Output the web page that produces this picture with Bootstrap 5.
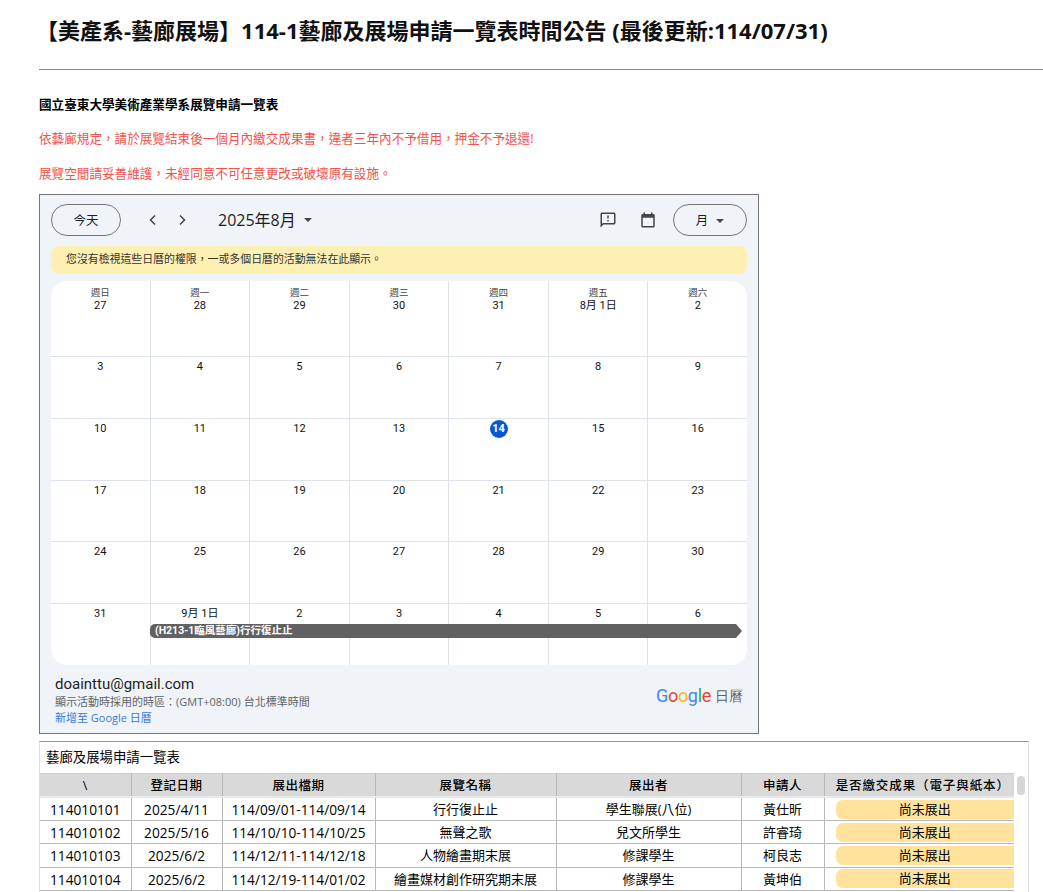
<!DOCTYPE html>
<html lang="zh-Hant">
<head>
<meta charset="utf-8">
<title>美產系-藝廊展場</title>
<link rel="stylesheet" href="https://cdn.jsdelivr.net/npm/bootstrap@5.3.0/dist/css/bootstrap.min.css">
<style>
  html, body { height: 892px; overflow: hidden; }
  body { font-family: "Open Sans", "Noto Sans CJK TC", sans-serif; color: #000; background: #fff; }
  .page-wrap { padding: 0 0 0 39px; }
  .post-title { font-size: 22px; font-weight: 700; margin: 0; padding: 17px 0 0 0; height: 69px; color: #111; text-indent: -3px; }
  .post-rule { border-top: 1px solid #888; margin: 0; opacity: 1; }
  .intro { font-size: 12.6px; line-height: 18px; margin: 0; }
  .intro-head { font-weight: 700; padding-top: 26px; }
  .intro-red { color: #f4514c; padding-top: 16px; }
  .intro-red + .intro-red { padding-top: 17px; }
  .gcal { width: 720px; height: 540px; margin-top: 11px; border: 1px solid #777; background: #f0f4f9; padding: 9px 11px 0; color: #1f1f1f; }
  .gcal-bar { height: 32px; }
  .pill-btn { height: 32px; border: 1px solid #747775; border-radius: 16px; font-size: 12.5px; background: transparent; color: #1f1f1f; padding: 2px 0 0; }
  .pill-today { width: 70px; }
  .pill-view { width: 74px; }
  .nav-arrows { margin-left: 27px; gap: 19px; width: 44px; }
  .month-label { font-size: 16px; margin-left: 26px; }
  .caret { width: 0; height: 0; border: 4px solid transparent; border-top-color: #444; border-bottom: 0; display: inline-block; }
  .tool-icons { gap: 22px; margin-right: 16px; }
  .warn-bar { height: 28px; margin-top: 10px; background: #fef0b3; border-radius: 8px; font-size: 10.9px; line-height: 25px; padding-left: 15px; color: #333; }
  .month-grid { margin-top: 7px; height: 384px; background: #fff; border-radius: 16px; overflow: hidden; }
  .week-row { height: 61.75px; border-top: 1px solid #dde3ea; position: relative; }
  .week-first { height: 75px; border-top: 0; }
  .day-cell { flex: 1 1 0; border-left: 1px solid #dde3ea; text-align: center; font-size: 11px; line-height: 14px; padding-top: 3px; color: #111; font-family: Roboto, "Noto Sans CJK TC", sans-serif; font-weight: 400; }
  .day-cell:first-child { border-left: 0; }
  .week-first .day-cell { padding-top: 5px; }
  .dow { display: block; font-size: 9.5px; line-height: 13px; color: #444; font-weight: 400; }
  .today-dot { display: inline-block; width: 18px; height: 18px; line-height: 18px; margin-top: -2px; border-radius: 50%; background: #0b57d0; color: #fff; font-weight: 700; }
  .event-bar { position: absolute; left: 99px; top: 20px; width: 592px; height: 14px; background: #616161; color: #fff; font-size: 10.5px; font-weight: 700; line-height: 13px; padding-left: 5px; border-radius: 5px 0 0 5px; clip-path: polygon(0 0, 586px 0, 100% 50%, 586px 100%, 0 100%); font-family: Roboto, "Noto Sans CJK TC", sans-serif; }
  .gcal-foot { padding: 10px 4px 0; }
  .foot-mail { font-size: 15px; line-height: 18px; font-family: Roboto, sans-serif; }
  .foot-zone { font-size: 11px; line-height: 17px; color: #5f6368; }
  .foot-add { font-size: 11px; line-height: 16px; color: #3b78d8; text-decoration: none; display: block; }
  .g-logo { font-family: Roboto, sans-serif; font-size: 18px; letter-spacing: -.3px; line-height: 22px; margin-bottom: 9px; }
  .g-name { font-size: 14px; color: #5f6368; margin-left: 4px; letter-spacing: 0; }
  .sheet-box { width: 990px; height: 170px; margin-top: 7px; border: 1px solid #ddd; border-top-color: #999; }
  .sheet-title { font-size: 13.4px; height: 31px; line-height: 31px; padding-left: 6px; }
  .sheet-inner { position: relative; }
  .sheet-table { width: 974px; table-layout: fixed; border-collapse: collapse; font-size: 13px; margin: 0; }
  .sheet-table th, .sheet-table td { border: 1px solid #b7b7b7; border-top: 0; text-align: center; padding: 1px 0 0; height: 23.33px; line-height: 21px; white-space: nowrap; overflow: hidden; font-weight: 400; }
  .sheet-table th { background: #d9d9d9; font-weight: 500; font-size: 12.5px; letter-spacing: .5px; height: 22px; border-top: 1px solid #ccc; }
  .sheet-table td:first-child, .sheet-table th:first-child { border-left: 0; }
  .sheet-table th:last-child, .sheet-table td:last-child { border-right: 0; }
  .sheet-table .th-wide { letter-spacing: .9px; padding-left: 7px; }
  .sheet-table thead tr { border-bottom: 2px solid #e6e9ef; }
  .sheet-table .num-cell { font-size: 13.7px; }
  .status-chip { display: block; margin: -1px 0 0 11px; height: 19px; line-height: 19px; background: #ffe29c; border-radius: 7px 0 0 7px; }
  .scroll-thumb { position: absolute; left: 977px; top: 3px; width: 8px; height: 19px; background: #d6d6d6; border-radius: 4px; }
</style>
</head>
<body>
<div class="page-wrap">
  <h1 class="post-title">【美產系-藝廊展場】114-1藝廊及展場申請一覽表時間公告 (最後更新:114/07/31)</h1>
  <hr class="post-rule">
  <p class="intro intro-head">國立臺東大學美術產業學系展覽申請一覽表</p>
  <p class="intro intro-red">依藝廊規定，請於展覽結束後一個月內繳交成果書，違者三年內不予借用，押金不予退還!</p>
  <p class="intro intro-red">展覽空間請妥善維護，未經同意不可任意更改或破壞原有設施。</p>

  <div class="gcal">
    <div class="gcal-bar d-flex align-items-center">
      <button type="button" class="pill-btn pill-today">今天</button>
      <div class="nav-arrows d-flex">
        <svg width="10" height="12" viewBox="0 0 10 12"><path d="M7 1.5 2.5 6 7 10.5" fill="none" stroke="#444" stroke-width="1.5"/></svg>
        <svg width="10" height="12" viewBox="0 0 10 12"><path d="M3 1.5 7.5 6 3 10.5" fill="none" stroke="#444" stroke-width="1.5"/></svg>
      </div>
      <div class="month-label d-flex align-items-center gap-2">2025年8月 <span class="caret"></span></div>
      <div class="tool-icons d-flex align-items-center ms-auto">
        <svg width="18" height="18" viewBox="0 0 24 24" fill="#444"><path d="M20 2H4c-1.1 0-1.99.9-1.99 2L2 22l4-4h14c1.1 0 2-.9 2-2V4c0-1.100-.9-2-2-2zm0 14H5.170L4 17.170V4h16v12zm-9-4h2v2h-2zm0-6h2v4h-2z"/></svg>
        <svg width="18" height="18" viewBox="0 0 24 24" fill="#444"><path d="M19 4h-1V2h-2v2H8V2H6v2H5c-1.100 0-2 .9-2 2v14c0 1.100.9 2 2 2h14c1.100 0 2-.9 2-2V6c0-1.100-.9-2-2-2zm0 16H5V9h14v11z"/></svg>
      </div>
      <button type="button" class="pill-btn pill-view d-flex align-items-center justify-content-center gap-2">月 <span class="caret"></span></button>
    </div>
    <div class="warn-bar">您沒有檢視這些日曆的權限，一或多個日曆的活動無法在此顯示。</div>

    <div class="month-grid">
      <div class="week-row week-first d-flex">
        <div class="day-cell"><span class="dow">週日</span>27</div>
        <div class="day-cell"><span class="dow">週一</span>28</div>
        <div class="day-cell"><span class="dow">週二</span>29</div>
        <div class="day-cell"><span class="dow">週三</span>30</div>
        <div class="day-cell"><span class="dow">週四</span>31</div>
        <div class="day-cell"><span class="dow">週五</span>8月 1日</div>
        <div class="day-cell"><span class="dow">週六</span>2</div>
      </div>
      <div class="week-row d-flex">
        <div class="day-cell">3</div><div class="day-cell">4</div><div class="day-cell">5</div><div class="day-cell">6</div><div class="day-cell">7</div><div class="day-cell">8</div><div class="day-cell">9</div>
      </div>
      <div class="week-row d-flex">
        <div class="day-cell">10</div><div class="day-cell">11</div><div class="day-cell">12</div><div class="day-cell">13</div><div class="day-cell"><span class="today-dot">14</span></div><div class="day-cell">15</div><div class="day-cell">16</div>
      </div>
      <div class="week-row d-flex">
        <div class="day-cell">17</div><div class="day-cell">18</div><div class="day-cell">19</div><div class="day-cell">20</div><div class="day-cell">21</div><div class="day-cell">22</div><div class="day-cell">23</div>
      </div>
      <div class="week-row d-flex">
        <div class="day-cell">24</div><div class="day-cell">25</div><div class="day-cell">26</div><div class="day-cell">27</div><div class="day-cell">28</div><div class="day-cell">29</div><div class="day-cell">30</div>
      </div>
      <div class="week-row d-flex">
        <div class="day-cell">31</div><div class="day-cell">9月 1日</div><div class="day-cell">2</div><div class="day-cell">3</div><div class="day-cell">4</div><div class="day-cell">5</div><div class="day-cell">6</div>
        <div class="event-bar">(H213-1臨風藝廊)行行復止止</div>
      </div>
    </div>

    <div class="gcal-foot d-flex justify-content-between align-items-center">
      <div>
        <div class="foot-mail">doainttu@gmail.com</div>
        <div class="foot-zone">顯示活動時採用的時區：(GMT+08:00) 台北標準時間</div>
        <a class="foot-add" href="#">新增至 Google 日曆</a>
      </div>
      <div class="g-logo d-flex align-items-center">
        <span><span style="color:#4285f4">G</span><span style="color:#ea4335">o</span><span style="color:#fbbc05">o</span><span style="color:#4285f4">g</span><span style="color:#34a853">l</span><span style="color:#ea4335">e</span></span>
        <span class="g-name">日曆</span>
      </div>
    </div>
  </div>

  <div class="sheet-box">
    <div class="sheet-title">藝廊及展場申請一覽表</div>
    <div class="sheet-inner">
      <table class="sheet-table">
        <colgroup><col style="width:91px"><col style="width:91px"><col style="width:153px"><col style="width:181px"><col style="width:185px"><col style="width:83px"><col style="width:190px"></colgroup>
        <thead>
          <tr><th>\</th><th>登記日期</th><th>展出檔期</th><th>展覽名稱</th><th>展出者</th><th>申請人</th><th class="th-wide">是否繳交成果（電子與紙本）</th></tr>
        </thead>
        <tbody>
          <tr><td class="num-cell">114010101</td><td class="num-cell">2025/4/11</td><td class="num-cell">114/09/01-114/09/14</td><td>行行復止止</td><td>學生聯展(八位)</td><td>黃仕昕</td><td><span class="status-chip">尚未展出</span></td></tr>
          <tr><td class="num-cell">114010102</td><td class="num-cell">2025/5/16</td><td class="num-cell">114/10/10-114/10/25</td><td>無聲之歌</td><td>兒文所學生</td><td>許睿琦</td><td><span class="status-chip">尚未展出</span></td></tr>
          <tr><td class="num-cell">114010103</td><td class="num-cell">2025/6/2</td><td class="num-cell">114/12/11-114/12/18</td><td>人物繪畫期末展</td><td>修課學生</td><td>柯良志</td><td><span class="status-chip">尚未展出</span></td></tr>
          <tr><td class="num-cell">114010104</td><td class="num-cell">2025/6/2</td><td class="num-cell">114/12/19-114/01/02</td><td>繪畫媒材創作研究期末展</td><td>修課學生</td><td>黃坤伯</td><td><span class="status-chip">尚未展出</span></td></tr>
        </tbody>
      </table>
      <div class="scroll-thumb"></div>
    </div>
  </div>
</div>
<script src="https://cdn.jsdelivr.net/npm/bootstrap@5.3.0/dist/js/bootstrap.bundle.min.js"></script>
</body>
</html>
